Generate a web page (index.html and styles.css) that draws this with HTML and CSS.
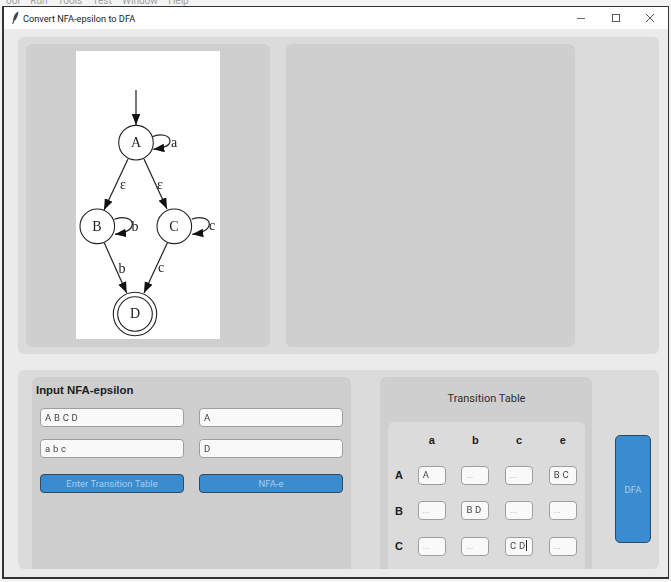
FILE: index.html
```html
<!DOCTYPE html>
<html lang="en">
<head>
    <meta charset="UTF-8">
    <title>Convert NFA-epsilon to DFA</title>
    <link rel="stylesheet" href="styles.css">
</head>
<body>
    <div class="behind">ool &nbsp; Run &nbsp; Tools &nbsp; Test &nbsp; Window &nbsp; Help</div>
    <div class="window">
        <div class="titlebar">
            <svg class="feather" width="10" height="14" viewBox="0 0 10 14"><path d="M7.5 0.5C4.5 1.5 2.5 5 2.2 9L1.2 13L2.2 13L3.2 10C5.8 8.5 7 4 7.5 0.5Z" fill="#3c4650"/></svg>
            <span class="title">Convert NFA-epsilon to DFA</span>
            <div class="controls">
                <svg width="10" height="10" viewBox="0 0 10 10"><path d="M0 5.5H8" stroke="#666" fill="none"/></svg>
                <svg width="10" height="10" viewBox="0 0 10 10"><rect x="1.5" y="1.5" width="7" height="7" stroke="#555" fill="none"/></svg>
                <svg width="10" height="10" viewBox="0 0 10 10"><path d="M1 1L9 9M9 1L1 9" stroke="#555" fill="none"/></svg>
            </div>
        </div>
        <div class="content">
            <div class="frame top-frame">
                <div class="panel graph-panel">
                    <svg class="graph" width="144" height="288" viewBox="0 0 144 288">
                        <defs>
                            <marker id="arrow" markerWidth="12" markerHeight="9" refX="11" refY="4.25" orient="auto" markerUnits="userSpaceOnUse">
                                <path d="M0 0L11 4.25L0 8.5Z" fill="#111"/>
                            </marker>
                        </defs>
                        <g class="edges">
                            <path d="M60 39V74" marker-end="url(#arrow)"/>
                            <path d="M52 108L28 159" marker-end="url(#arrow)"/>
                            <path d="M68 108L91 158" marker-end="url(#arrow)"/>
                            <path d="M28.3 192L50.7 242" marker-end="url(#arrow)"/>
                            <path d="M91.3 192L68 242" marker-end="url(#arrow)"/>
                            <path d="M76.3 85.7C84 82 94 84 94 90C94 95 88 97 77.3 98.3" marker-end="url(#arrow)"/>
                            <path d="M38.3 168.3C46 165 56.3 167 56.3 173C56.3 178 50 182 39 183.3" marker-end="url(#arrow)"/>
                            <path d="M115.7 168.3C123 165 133.3 167 133.3 173C133.3 178 127 182 116.3 183.3" marker-end="url(#arrow)"/>
                        </g>
                        <g class="states">
                            <circle cx="60" cy="91.7" r="17.3"/>
                            <circle cx="21.3" cy="175.3" r="17.3"/>
                            <circle cx="98.3" cy="175.3" r="17.3"/>
                            <circle cx="59" cy="263" r="21.7"/>
                            <circle cx="59" cy="263" r="17.3"/>
                        </g>
                        <g class="labels">
                            <text x="60" y="96">A</text>
                            <text x="21" y="180">B</text>
                            <text x="98" y="180">C</text>
                            <text x="59" y="267">D</text>
                            <text x="98" y="96">a</text>
                            <text x="47" y="138">ε</text>
                            <text x="84" y="138">ε</text>
                            <text x="59" y="180">b</text>
                            <text x="136" y="179">c</text>
                            <text x="46" y="222">b</text>
                            <text x="85" y="221">c</text>
                        </g>
                    </svg>
                </div>
                <div class="panel result-panel"></div>
            </div>
            <div class="frame bottom-frame">
                <div class="panel input-panel">
                    <h1 class="input-title">Input NFA-epsilon</h1>
                    <div class="input-grid">
                        <div class="entry">A B C D</div>
                        <div class="entry">A</div>
                        <div class="entry">a b c</div>
                        <div class="entry">D</div>
                        <button class="btn">Enter Transition Table</button>
                        <button class="btn">NFA-e</button>
                    </div>
                </div>
                <div class="panel table-panel">
                    <div class="table-title">Transition Table</div>
                    <div class="table-box">
                        <span></span><b>a</b><b>b</b><b>c</b><b>e</b>
                        <b>A</b><div class="cell">A</div><div class="cell empty">...</div><div class="cell empty">...</div><div class="cell">B C</div>
                        <b>B</b><div class="cell empty">...</div><div class="cell">B D</div><div class="cell empty">...</div><div class="cell empty">...</div>
                        <b>C</b><div class="cell empty">...</div><div class="cell empty">...</div><div class="cell">C D<span class="caret"></span></div><div class="cell empty">...</div>
                    </div>
                </div>
                <button class="btn dfa-btn">DFA</button>
            </div>
        </div>
    </div>
</body>
</html>
```

FILE: styles.css
```css
* {
    box-sizing: border-box;
}
html, body {
    height: 100%;
}
body {
    margin: 0;
    overflow: hidden;
    background: #f4f4f4;
    font-family: Roboto, "Liberation Sans", sans-serif;
    color: #333;
}
.behind {
    height: 6px;
    overflow: hidden;
    margin-left: 6px;
    font-size: 10px;
    line-height: 1px;
    word-spacing: 1px;
    color: #a0a0a0;
}
.window {
    width: 667px;
    height: 573px;
    margin-left: 2px;
    border: 1px solid #333;
    border-width: 1px 1px 2px 2px;
    background: #ebebeb;
    display: flex;
    flex-direction: column;
}
.titlebar {
    height: 22px;
    flex: none;
    background: #fff;
    display: flex;
    align-items: center;
    padding-left: 7px;
}
.feather {
    margin-right: 2px;
}
.title {
    font-size: 9.2px;
    color: #222;
}
.controls {
    margin-left: auto;
    margin-right: 13px;
    display: flex;
    gap: 24px;
}
.content {
    flex: 1;
    padding: 8px 9px 7px 14px;
    display: flex;
    flex-direction: column;
    gap: 16px;
}
.frame {
    background: #dbdbdb;
    border-radius: 6px;
}
.panel {
    background: #cfcfcf;
    border-radius: 6px;
}
.top-frame {
    height: 317px;
    padding: 7px 8px;
    display: flex;
    gap: 16px;
}
.graph-panel {
    width: 244px;
    display: flex;
    justify-content: center;
    padding-top: 7px;
}
.result-panel {
    width: 289px;
}
.graph {
    display: block;
    background: #fff;
    filter: grayscale(1);
}
.edges path {
    fill: none;
    stroke: #222;
    stroke-width: 1.2;
}
.states circle {
    fill: none;
    stroke: #222;
    stroke-width: 1.1;
}
.labels text {
    font-family: "Liberation Serif", serif;
    font-size: 14px;
    text-anchor: middle;
    fill: #222;
}
.bottom-frame {
    height: 199px;
    padding: 7px 8px 0 14px;
    display: flex;
    align-items: flex-start;
}
.input-panel {
    width: 319px;
    height: 192px;
    padding: 6px 8px 0 4px;
    border-radius: 6px 6px 0 0;
}
.input-title {
    margin: 0 0 11px;
    font-size: 11.4px;
    line-height: 14px;
    font-weight: bold;
    font-family: "Liberation Sans", sans-serif;
    color: #1c1c1c;
}
.input-grid {
    margin-left: 4px;
    display: grid;
    grid-template-columns: 144px 144px;
    grid-template-rows: 19px 19px 23px;
    column-gap: 15px;
    row-gap: 12px;
}
.input-grid .btn {
    height: 19px;
    align-self: end;
}
.entry {
    background: #f9f9f9;
    border: 1px solid #9a9fa3;
    border-radius: 4px;
    padding-left: 4px;
    font-size: 9.5px;
    letter-spacing: 0.2px;
    line-height: 17px;
    color: #444;
    filter: grayscale(1);
}
.btn {
    background: #3a8cd0;
    border: 1px solid #35495a;
    border-radius: 4px;
    padding: 0;
    font-family: Roboto, "Liberation Sans", sans-serif;
    font-size: 9.5px;
    color: #a9cdea;
}
.table-panel {
    width: 212px;
    height: 192px;
    margin-left: 29px;
    padding: 0 7px 0 8px;
    border-radius: 6px 6px 0 0;
}
.table-title {
    height: 45px;
    line-height: 43px;
    text-align: center;
    font-size: 11px;
    color: #2e2e2e;
}
.table-box {
    height: 147px;
    background: #dbdbdb;
    border-radius: 6px 6px 0 0;
    padding: 8px 7px 0 7px;
    display: grid;
    grid-template-columns: 7px repeat(4, 28px);
    column-gap: 15.7px;
    grid-template-rows: repeat(4, 19px);
    row-gap: 16.5px;
    align-items: center;
    justify-items: center;
}
.table-box b {
    font-family: "Liberation Sans", sans-serif;
    font-size: 11px;
    color: #1c1c1c;
}
.table-box b:nth-child(5n+6) {
    justify-self: start;
}
.cell {
    width: 28px;
    height: 19px;
    background: #f9f9f9;
    border: 1px solid #9a9fa3;
    border-radius: 4px;
    padding-left: 4px;
    font-size: 9.5px;
    letter-spacing: 0.2px;
    line-height: 15px;
    color: #444;
    filter: grayscale(1);
}
.cell.empty {
    color: #aaa;
    font-size: 8px;
    line-height: 17px;
}
.caret {
    display: inline-block;
    width: 1px;
    height: 11px;
    margin-left: 1px;
    vertical-align: -2px;
    background: #222;
}
.dfa-btn {
    width: 36px;
    height: 108px;
    margin: 58px 0 0 23px;
    flex: none;
    border-radius: 5px;
}
```
